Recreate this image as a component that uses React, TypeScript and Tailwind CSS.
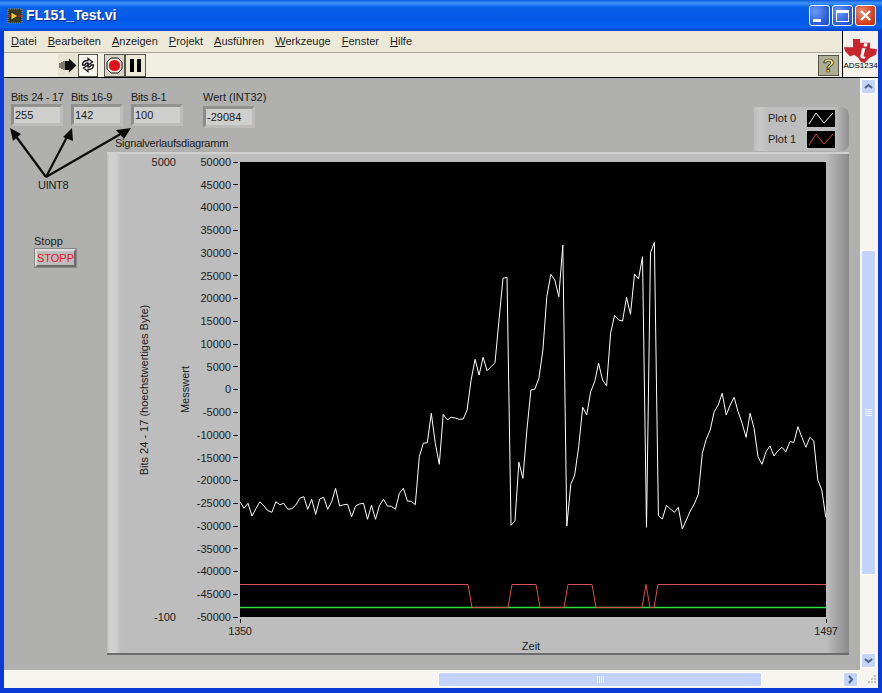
const menus = [
  ["D", "atei"],
  ["B", "earbeiten"],
  ["A", "nzeigen"],
  ["P", "rojekt"],
  ["A", "usführen"],
  ["W", "erkzeuge"],
  ["F", "enster"],
  ["H", "ilfe"],
];

const yTicks = [
  "50000", "45000", "40000", "35000", "30000", "25000", "20000", "15000", "10000", "5000", "0",
  "-5000", "-10000", "-15000", "-20000", "-25000", "-30000", "-35000", "-40000", "-45000", "-50000",
];

// white trace, one value per sample, in thirds of a pixel
const trace = [
  815, 835, 820, 858, 836, 815, 828, 842, 847, 815, 824, 820, 838, 836, 825, 805, 800, 838, 808, 853,
  807, 802, 838, 815, 775, 828, 824, 823, 860, 828, 822, 820, 868, 826, 868, 826, 808, 828, 829, 838,
  790, 775, 813, 814, 824, 680, 640, 638, 550, 640, 703, 553, 569, 562, 564, 568, 567, 540, 450, 388,
  435, 382, 422, 410, 398, 270, 145, 142, 886, 872, 697, 745, 600, 480, 477, 445, 360, 200, 133, 150,
  200, 45, 888, 763, 735, 650, 532, 555, 485, 455, 400, 450, 468, 310, 256, 270, 273, 202, 253, 132,
  147, 80, 892, 68, 37, 857, 867, 826, 837, 847, 832, 897, 870, 843, 822, 793, 670, 628, 600, 545,
  525, 490, 555, 525, 502, 545, 580, 622, 550, 595, 680, 703, 665, 648, 678, 662, 652, 665, 635, 637,
  590, 622, 652, 622, 633, 750, 780, 862,
];
const tracePoints = trace.map((v, i) => `${(i * 3.985).toFixed(1)},${(68 + v / 3).toFixed(1)}`).join(" ");

// red trace: high until each step, then low, and so on
const redPoints =
  "0,422.5 228,422.5 232,445.5 268,445.5 272,422.5 296,422.5 300,445.5 324,445.5 328,422.5 352,422.5 356,445.5 402,445.5 406,422.5 410,445.5 414,445.5 418,422.5 586,422.5";

function Field({ label, value, wide }: { label: string; value: string; wide?: boolean }) {
  return (
    <div className="flex w-[52px] flex-col">
      <span className={wide ? "h-[16px] leading-[14px] whitespace-nowrap" : "h-[14px] leading-[14px] tracking-[-0.25px] whitespace-nowrap"}>{label}</span>
      <div className="flex h-[22px] items-center border-[3px] border-t-[#929290] border-r-[#bcbcba] border-b-[#bcbcba] border-l-[#8c8c8a] bg-[#cfcfcd] pl-[1px]">
        {value}
      </div>
    </div>
  );
}

function TitleButton({ close, children }: { close?: boolean; children: React.ReactNode }) {
  return (
    <div
      className={
        close
          ? "flex h-[21px] w-[21px] items-center justify-center rounded-[3px] border border-white bg-[radial-gradient(circle_at_30%_30%,#e98b6c,#d6451f_60%,#b8300f)]"
          : "flex h-[21px] w-[21px] items-center justify-center rounded-[3px] border border-white bg-[radial-gradient(circle_at_30%_30%,#6d9bf5,#2f63dd_60%,#1c48c8)]"
      }
    >
      {children}
    </div>
  );
}

function ScrollButton({ d }: { d: string }) {
  return (
    <div className="flex h-[15px] w-[15px] items-center justify-center rounded-[2px] border border-white bg-[#c3d3fb]">
      <svg width="9" height="9" viewBox="0 0 9 9">
        <path d={d} fill="none" stroke="#4d6185" strokeWidth="2" />
      </svg>
    </div>
  );
}

function Swatch({ color }: { color: string }) {
  return (
    <svg width="28" height="17" viewBox="0 0 28 17" className="bg-black">
      <polyline points="2,14 9,3 17,13 26,3" fill="none" stroke={color} strokeWidth="1" />
    </svg>
  );
}

export default function App() {
  return (
    <div className="flex h-[693px] w-[882px] flex-col overflow-hidden bg-[#0a3ad8] font-['Liberation_Sans',sans-serif] text-[11px] text-[#1c1c1c]">
      {/* Title bar */}
      <div className="flex h-[31px] shrink-0 items-center bg-[linear-gradient(180deg,#0a5be0_0px,#3f94f8_3px,#0a62ea_7px,#0058e6_20px,#0a62f0_27px,#0040c8_31px)] pr-[6px] pl-[7px]">
        <svg width="16" height="16" viewBox="0 0 16 16">
          <rect x="1" y="1" width="14" height="14" fill="#3a3a20" stroke="#9a9a70" strokeDasharray="1 1" />
          <path d="M4 4 L11 8 L4 12 Z" fill="#f2d21c" stroke="#111" strokeWidth="0.7" />
          <path d="M0 8 H4 M11 8 H16" stroke="#e0201c" strokeWidth="1" />
        </svg>
        <span className="ml-[3px] text-[14px] font-bold tracking-[-0.1px] text-white [text-shadow:1px_1px_0_#0a2a90]">FL151_Test.vi</span>
        <div className="ml-auto flex gap-[2px]">
          <TitleButton>
            <div className="mt-[9px] mr-[5px] h-[3px] w-[8px] bg-white" />
          </TitleButton>
          <TitleButton>
            <div className="h-[12px] w-[13px] border border-t-[3px] border-white" />
          </TitleButton>
          <TitleButton close>
            <svg width="13" height="13" viewBox="0 0 13 13">
              <path d="M2 2 L11 11 M11 2 L2 11" stroke="white" strokeWidth="2.4" />
            </svg>
          </TitleButton>
        </div>
      </div>

      {/* Client area */}
      <div className="mx-[4px] flex h-[657px] flex-col bg-[#f6f5ef]">
        <div className="flex h-[47px] shrink-0 border-b border-black">
          <div className="flex flex-1 flex-col">
            <div className="flex h-[22px] items-center gap-[11px] border-b border-[#aca899] bg-[#ece9d8] pl-[7px]">
              {menus.map(([first, rest], i) => (
                <span key={i}>
                  <span className="underline">{first}</span>
                  {rest}
                </span>
              ))}
            </div>
            <div className="flex flex-1 items-center bg-[#f1efe2] pr-[3px] pl-[54px]">
              {/* Run */}
              <div className="flex h-[23px] w-[20px] items-center justify-center bg-[#e6e3d3]">
                <svg width="18" height="15" viewBox="0 0 18 15">
                  <path d="M1 5 V10 M3 4 V11 M5 3 V12" stroke="#111" strokeWidth="1" />
                  <path d="M6 3 H10 V0.5 L17.5 7.5 L10 14.5 V12 H6 Z" fill="#111" />
                </svg>
              </div>
              {/* Run continuously */}
              <div className="flex h-[23px] w-[20px] items-center justify-center border border-[#55554c] bg-[#f6f5ee]">
                <svg width="16" height="16" viewBox="0 0 16 16" fill="none" stroke="#111" strokeWidth="1.3">
                  <path d="M2.5 8 C2.5 5 5 3.5 8 3.5 V1.5 L12.5 5 L8 8 V6 C6 6 5 7 5 8 Z" fill="#fff" />
                  <path d="M13.5 8 C13.5 11 11 12.5 8 12.5 V14.5 L3.5 11 L8 8 V10 C10 10 11 9 11 8 Z" fill="#fff" />
                </svg>
              </div>
              {/* Abort */}
              <div className="ml-[6px] flex h-[23px] w-[21px] items-center justify-center border border-[#55554c] bg-[#d8d5c6]">
                <svg width="17" height="17" viewBox="0 0 17 17">
                  <path d="M5 1 H12 L16 5 V12 L12 16 H5 L1 12 V5 Z" fill="#e5e2d4" stroke="#111" />
                  <circle cx="8.5" cy="8.5" r="5.6" fill="#e0101c" />
                </svg>
              </div>
              {/* Pause */}
              <div className="flex h-[23px] w-[21px] items-center justify-center gap-[3px] border border-[#55554c] bg-[#ece9d8]">
                <div className="h-[13px] w-[4px] bg-black" />
                <div className="h-[13px] w-[4px] bg-black" />
              </div>
              {/* Context help */}
              <div className="ml-auto flex h-[21px] w-[21px] items-center justify-center border border-[#55554c] bg-[#aeae97] text-[19px] leading-none font-bold text-[#f5ec7a] [-webkit-text-stroke:0.7px_#222]">
                ?
              </div>
            </div>
          </div>
          {/* Logo */}
          <div className="flex w-[36px] flex-col items-center border-l border-black bg-[#f3f1ea] pt-[8px]">
            <svg width="33" height="24" viewBox="0 0 33 26" preserveAspectRatio="none" className="shrink-0">
              <path d="M9 0 H16 V4 H26 V10 L33 11 L32 17 L26 20 L22 24 L21 26 L17 25 L14 20 L10 17 L6 19 L1 13 L0 9 H9 Z" fill="#c8252e" />
              <path d="M18 10 H21.5 L19.5 18 Q19 20 21.5 19 L21 21 Q15.5 22 16.5 18 Z M20 4.5 H23.5 L23 8 H19.5 Z" fill="#fff" />
            </svg>
            <span className="-mt-[1px] text-[8px] leading-[8px] whitespace-nowrap text-black">ADS1234</span>
          </div>
        </div>

        <div className="flex min-h-0 flex-1">
          {/* Front panel: controls sit where the user dropped them */}
          <div className="relative flex-1 overflow-hidden bg-[#b0b0ae]">
            <div className="absolute top-[12px] left-[7px] flex gap-[8px]">
              <Field label="Bits 24 - 17" value="255" />
              <Field label="Bits 16-9" value="142" />
              <Field label="Bits 8-1" value="100" />
            </div>
            <div className="absolute top-[12px] left-[199px]">
              <Field label="Wert (INT32)" value="-29084" wide />
            </div>

            <svg className="absolute top-[46px] left-[0px]" width="140" height="60" viewBox="0 0 140 60">
              <g stroke="#0c0c0c" strokeWidth="2.2" fill="none">
                <path d="M42 53 L11 11" />
                <path d="M42 53 L64 11" />
                <path d="M42 53 L120 8" />
              </g>
              <path d="M6 4 L17 10 L9 17 Z M68 4 L69 17 L59 13 Z M127 4 L120 15 L112 6 Z" fill="#0c0c0c" />
            </svg>
            <span className="absolute top-[99px] left-[34px] tracking-[-0.3px]">UINT8</span>
            <span className="absolute top-[155px] left-[30px]">Stopp</span>
            <div className="absolute top-[171px] left-[31px] flex h-[18px] w-[41px] items-center justify-center border-2 border-t-[#dcdcdc] border-r-[#6c6c6c] border-b-[#6c6c6c] border-l-[#dcdcdc] bg-[#bdbdbb] text-[#e8142c] outline outline-[#8a8a8a]">
              STOPP
            </div>
            <span className="absolute top-[57px] left-[111px] tracking-[-0.22px]">Signalverlaufsdiagramm</span>

            {/* Legend */}
            <div className="absolute top-[29px] left-[750px] flex h-[44px] w-[95px] flex-col justify-center gap-[4px] rounded-tr-[8px] rounded-br-[8px] bg-[linear-gradient(90deg,#bdbdbd_0px,#c8c8c8_6px,#bdbdbd_14px,#bdbdbd_81px,#8e8e8e_95px)] pl-[14px]">
              <div className="flex items-center">
                <span className="w-[39px]">Plot 0</span>
                <Swatch color="#ffffff" />
              </div>
              <div className="flex items-center">
                <span className="w-[39px]">Plot 1</span>
                <Swatch color="#d04a48" />
              </div>
            </div>

            {/* Chart */}
            <div className="absolute top-[74px] left-[103px] flex h-[503px] w-[742px] border-t-[2px] border-b-[2px] border-t-[#d0d0d0] border-b-[#6c6c6c] bg-[linear-gradient(90deg,#bdbdbd_0px,#d2d2d2_3px,#cfcfcf_9px,#bdbdbd_14px,#bdbdbd_719px,#8a8a8a_742px)] pt-[8px]">
              <div className="flex h-[455px] w-[133px] shrink-0">
                <div className="relative flex w-[69px] shrink-0 flex-col justify-between">
                  <span className="flex h-0 items-center justify-end">5000</span>
                  <span className="absolute top-1/2 left-[29px] -translate-y-1/2 rotate-180 whitespace-nowrap [writing-mode:vertical-rl]">Bits 24 - 17 (hoechstwertiges Byte)</span>
                  <span className="flex h-0 items-center justify-end">-100</span>
                </div>
                <div className="flex w-[18px] shrink-0 items-center justify-center">
                  <span className="rotate-180 [writing-mode:vertical-rl]">Messwert</span>
                </div>
                <div className="flex flex-1 flex-col justify-between">
                  {yTicks.map((t) => (
                    <div key={t} className="flex h-0 items-center justify-end">
                      <span>{t}</span>
                      <span className="mx-[2px] h-[1px] w-[5px] bg-[#111]" />
                    </div>
                  ))}
                </div>
              </div>
              <div className="flex w-[586px] shrink-0 flex-col">
                <svg width="586" height="455" viewBox="0 0 586 455" className="block shrink-0 bg-black">
                  <polyline points="0,445.5 586,445.5" fill="none" stroke="#28e040" strokeWidth="1.6" />
                  <polyline points={redPoints} fill="none" stroke="#d85050" strokeWidth="1" />
                  <polyline points={tracePoints} fill="none" stroke="#ffffff" strokeWidth="1" />
                </svg>
                <div className="flex justify-between">
                  <div className="flex w-0 flex-col items-center">
                    <span className="mt-[2px] h-[4px] w-[1px] bg-[#111]" />
                    <span className="leading-[16px] tracking-tight">1350</span>
                  </div>
                  <span className="mt-[22px] mr-[4px] leading-[14px]">Zeit</span>
                  <div className="flex w-0 flex-col items-center">
                    <span className="mt-[2px] h-[4px] w-[1px] bg-[#111]" />
                    <span className="leading-[16px] tracking-tight">1497</span>
                  </div>
                </div>
              </div>
            </div>
          </div>

          {/* Vertical scrollbar */}
          <div className="flex w-[18px] shrink-0 flex-col items-center bg-[#f6f5ef] pr-[1px]">
            <div className="mt-[1px]">
              <ScrollButton d="M1 6 L4.5 3 L8 6" />
            </div>
            <div className="mt-[156px] flex h-[325px] w-[15px] items-center justify-center rounded-[2px] border border-white bg-[#c3d3fb]">
              <div className="flex flex-col gap-[1px]">
                <div className="h-[1px] w-[7px] bg-[#eef3ff]" />
                <div className="h-[1px] w-[7px] bg-[#eef3ff]" />
                <div className="h-[1px] w-[7px] bg-[#eef3ff]" />
                <div className="h-[1px] w-[7px] bg-[#eef3ff]" />
              </div>
            </div>
            <div className="mt-auto mb-[2px]">
              <ScrollButton d="M1 3 L4.5 6 L8 3" />
            </div>
          </div>
        </div>

        {/* Horizontal scrollbar */}
        <div className="flex h-[18px] shrink-0 items-center bg-[#f6f5ef]">
          <div className="ml-[434px] flex h-[15px] w-[324px] items-center justify-center gap-[1px] rounded-[2px] border border-white bg-[#c3d3fb]">
            <div className="h-[7px] w-[1px] bg-[#eef3ff]" />
            <div className="h-[7px] w-[1px] bg-[#eef3ff]" />
            <div className="h-[7px] w-[1px] bg-[#eef3ff]" />
            <div className="h-[7px] w-[1px] bg-[#eef3ff]" />
          </div>
          <div className="ml-[81px]">
            <ScrollButton d="M3 1 L6 4.5 L3 8" />
          </div>
          <div className="mr-[2px] ml-auto grid grid-cols-3 gap-[1px]">
            <span className="h-[2px] w-[2px]" />
            <span className="h-[2px] w-[2px]" />
            <span className="h-[2px] w-[2px] bg-[#c6c3b4]" />
            <span className="h-[2px] w-[2px]" />
            <span className="h-[2px] w-[2px] bg-[#c6c3b4]" />
            <span className="h-[2px] w-[2px] bg-[#c6c3b4]" />
            <span className="h-[2px] w-[2px] bg-[#c6c3b4]" />
            <span className="h-[2px] w-[2px] bg-[#c6c3b4]" />
            <span className="h-[2px] w-[2px] bg-[#c6c3b4]" />
          </div>
        </div>
      </div>
    </div>
  );
}
